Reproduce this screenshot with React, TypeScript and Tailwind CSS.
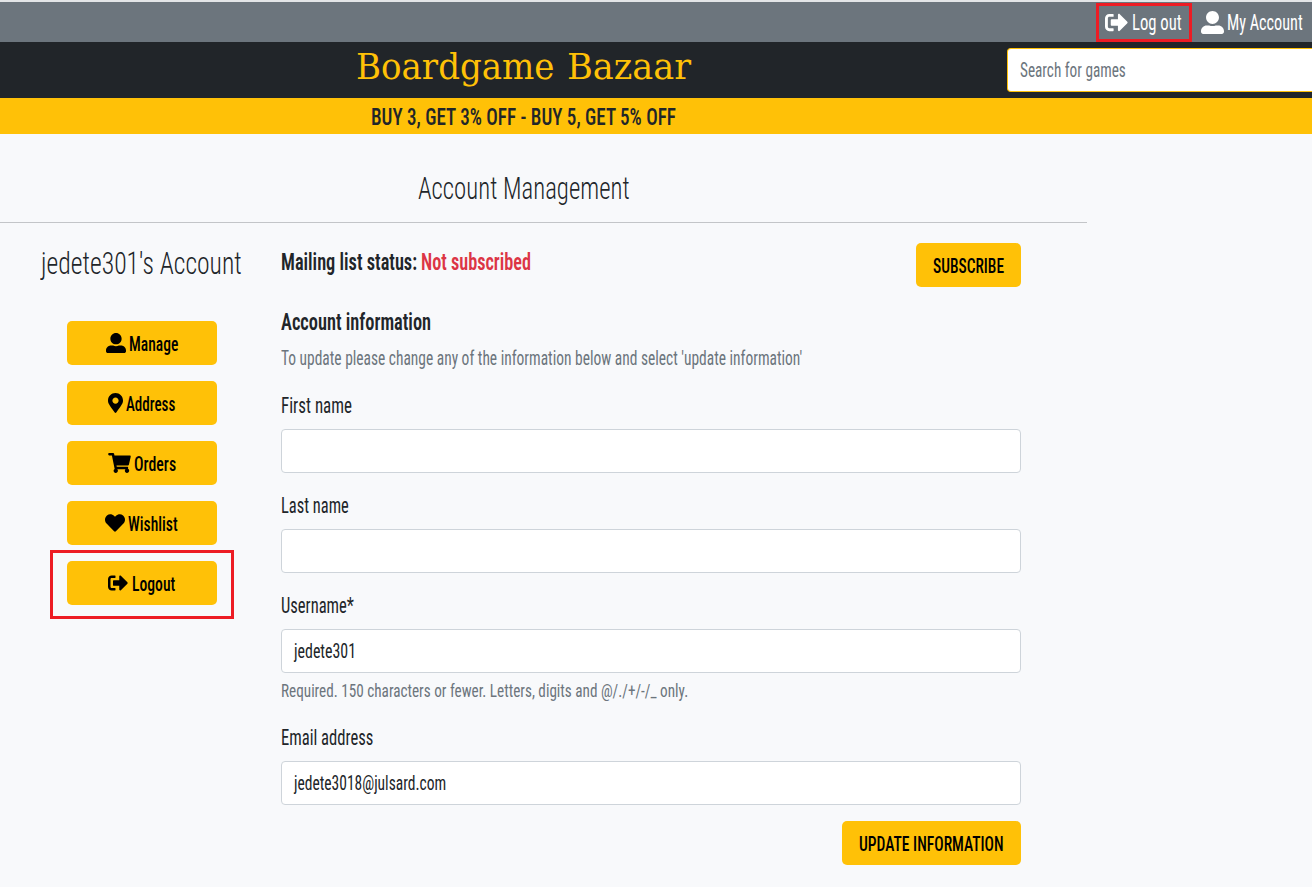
import React, { useLayoutEffect, useRef, useState } from 'react';
import { FaHeart, FaMapMarkerAlt, FaShoppingCart, FaSignOutAlt, FaUserAlt } from 'react-icons/fa';

/* One line of condensed text, squeezed horizontally to the given width. */
function Fit({ w, className = '', children }: { w: number; className?: string; children: string }) {
  const ref = useRef<HTMLSpanElement>(null);
  const [scale, setScale] = useState(1);
  useLayoutEffect(() => {
    if (ref.current) setScale(w / ref.current.offsetWidth);
  }, [w, children]);
  return (
    <span className={`flex shrink-0 items-center whitespace-nowrap ${className}`} style={{ width: w }}>
      <span ref={ref} className="block shrink-0 origin-left" style={{ transform: `scaleX(${scale})` }}>
        {children}
      </span>
    </span>
  );
}

const menu = [
  { label: 'Manage', w: 49, gap: 'gap-[3px]', Icon: FaUserAlt, icon: 'h-5 w-5' },
  { label: 'Address', w: 49, gap: 'gap-[3px]', Icon: FaMapMarkerAlt, icon: 'h-5 w-[15px]' },
  { label: 'Orders', w: 42, gap: 'gap-[3px]', Icon: FaShoppingCart, icon: 'h-5 w-[23px]' },
  { label: 'Wishlist', w: 50, gap: 'gap-[3px]', Icon: FaHeart, icon: 'h-5 w-5' },
  { label: 'Logout', w: 43, gap: 'gap-1', Icon: FaSignOutAlt, icon: 'h-5 w-5' },
];

function Field({ label, labelW, value, valueW = 0 }: { label: string; labelW: number; value?: string; valueW?: number }) {
  return (
    <div className="flex flex-col">
      <Fit w={labelW} className="h-8 pt-[2px] text-[22px] font-[370]">{label}</Fit>
      <div className="mt-2 flex h-11 items-center rounded-[4px] border border-[#ced4da] bg-white pl-3">
        {value && <Fit w={valueW} className="h-8 text-[20px] font-[370]">{value}</Fit>}
      </div>
    </div>
  );
}

export default function App() {
  return (
    <div className="flex h-[887px] w-[1312px] flex-col overflow-hidden bg-[#f8f9fb] font-['Roboto',sans-serif] leading-none text-[#212529] [font-stretch:75%]">
      <div className="flex h-[42px] shrink-0 items-center justify-end border-t-2 border-[#e3e5e7] bg-[#6c757d] pr-[9px] text-[22px] text-white">
        <a className="relative flex h-10 items-center gap-1 px-1">
          <FaSignOutAlt className="h-[23px] w-[23px]" />
          <Fit w={50} className="h-8 pt-[2px]">Log out</Fit>
          <span className="absolute top-px -left-[5px] h-[39px] w-24 border-[3px] border-[#ed1c24]" />
        </a>
        <a className="ml-[15px] flex h-10 items-center gap-[3px]">
          <FaUserAlt className="h-[23px] w-[23px]" />
          <Fit w={76} className="h-8 pt-[2px]">My Account</Fit>
        </a>
      </div>

      <header className="flex h-14 shrink-0 items-center bg-[#212529]">
        <div className="flex w-[1007px] gap-[13px] pl-[356px] font-['DejaVu_Serif',serif] text-[35px] text-[#ffc107]">
          <Fit w={198} className="h-14 pb-[5px]">Boardgame</Fit>
          <Fit w={124} className="h-14 pb-[5px]">Bazaar</Fit>
        </div>
        <div className="flex h-11 flex-1 items-center rounded-l-[4px] border border-r-0 border-[#ffc107] bg-white pl-3 text-[20px] font-[370] text-[#6c757d]">
          <Fit w={106} className="h-8">Search for games</Fit>
        </div>
      </header>

      <div className="flex h-9 shrink-0 items-center bg-[#ffc107] pl-[371px]">
        <Fit w={305} className="h-9 pt-[2px] text-[24px] font-medium">BUY 3, GET 3% OFF - BUY 5, GET 5% OFF</Fit>
      </div>

      <div className="flex h-[89px] w-[1087px] shrink-0 items-start border-b border-[#c3c5c8] pt-[34px] pl-[418px]">
        <Fit w={212} className="h-10 text-[31px] font-[340]">Account Management</Fit>
      </div>

      <main className="flex">
        <aside className="flex w-[281px] flex-col pt-5">
          <Fit w={201} className="ml-[41px] h-10 text-[31px] font-[340]">{"jedete301's Account"}</Fit>
          <nav className="mt-[38px] ml-[67px] flex w-[150px] flex-col gap-4">
            {menu.map(({ label, w, gap, Icon, icon }) => (
              <a key={label} className={`relative flex h-11 items-center justify-center rounded-[5px] bg-[#ffc107] pr-px text-[20px] font-medium text-black ${gap}`}>
                <Icon className={icon} preserveAspectRatio="xMidYMid meet" />
                <Fit w={w} className="h-8 pt-px">{label}</Fit>
                {label === 'Logout' && <span className="absolute -top-[11px] -left-[17px] h-[69px] w-[184px] border-[3px] border-[#ed1c24]" />}
              </a>
            ))}
          </nav>
        </aside>

        <section className="flex w-[740px] flex-col pt-5">
          <div className="flex h-11 justify-between">
            <div className="flex h-[37px] items-center gap-1 text-[24px] font-[560]">
              <Fit w={136} className="h-8">Mailing list status:</Fit>
              <Fit w={110} className="h-8 text-[#dc3545]">Not subscribed</Fit>
            </div>
            <button className="flex w-[105px] items-center rounded-[5px] bg-[#ffc107] pl-[17px] text-[20px] font-medium text-black">
              <Fit w={71} className="h-8 pt-px">SUBSCRIBE</Fit>
            </button>
          </div>
          <Fit w={150} className="mt-[19px] h-8 text-[24px] font-[560]">Account information</Fit>
          <Fit w={521} className="mt-1 h-8 text-[20px] font-[370] text-[#6c757d]">{"To update please change any of the information below and select 'update information'"}</Fit>
          <div className="mt-[15px] flex flex-col gap-4">
            <Field label="First name" labelW={71} />
            <Field label="Last name" labelW={68} />
            <div className="flex flex-col">
              <Field label="Username*" labelW={73} value="jedete301" valueW={62} />
              <Fit w={407} className="mt-px h-8 text-[19px] font-[370] text-[#6c757d]">Required. 150 characters or fewer. Letters, digits and @/./+/-/_ only.</Fit>
            </div>
          </div>
          <div className="mt-[15px]">
            <Field label="Email address" labelW={92} value="jedete3018@julsard.com" valueW={152} />
          </div>
          <button className="mt-4 flex h-11 w-[179px] items-center self-end rounded-[5px] bg-[#ffc107] pl-[17px] text-[20px] font-medium text-black">
            <Fit w={145} className="h-8 pt-px">UPDATE INFORMATION</Fit>
          </button>
        </section>
      </main>
    </div>
  );
}
